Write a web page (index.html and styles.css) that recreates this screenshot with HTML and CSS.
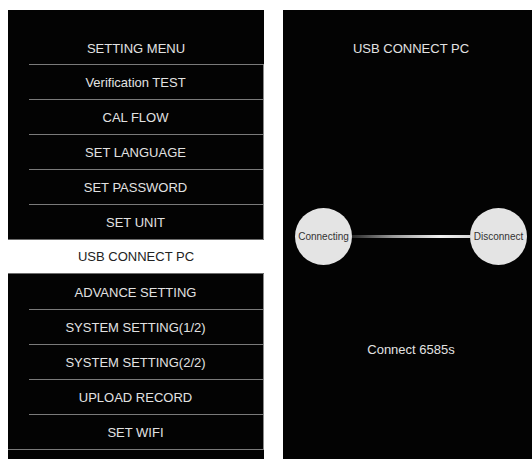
FILE: index.html
```html
<!DOCTYPE html>
<html lang="en">
<head>
    <meta charset="UTF-8">
    <meta name="viewport" content="width=device-width, initial-scale=1.0">
    <title>USB Connect PC</title>
    <link rel="stylesheet" href="styles.css">
</head>
<body>
    <div class="screens">
        <div class="panel menu">
            <div class="menu-title">SETTING MENU</div>
            <div class="menu-item">Verification TEST</div>
            <div class="menu-item">CAL FLOW</div>
            <div class="menu-item">SET LANGUAGE</div>
            <div class="menu-item">SET PASSWORD</div>
            <div class="menu-item">SET UNIT</div>
            <div class="menu-item active">USB CONNECT PC</div>
            <div class="menu-item first">ADVANCE SETTING</div>
            <div class="menu-item">SYSTEM SETTING(1/2)</div>
            <div class="menu-item">SYSTEM SETTING(2/2)</div>
            <div class="menu-item">UPLOAD RECORD</div>
            <div class="menu-item">SET WIFI</div>
            <div class="menu-end"></div>
        </div>

        <div class="panel usb">
            <div class="usb-title">USB CONNECT PC</div>
            <div class="link">
                <div class="node">Connecting</div>
                <div class="wire"></div>
                <div class="node">Disconnect</div>
            </div>
            <div class="usb-status">Connect 6585s</div>
        </div>
    </div>
</body>
</html>
```

FILE: styles.css
```css
html, body {
    margin: 0;
    height: 100%;
    overflow: hidden;
}
body {
    background: #fff;
    font-family: "Liberation Sans", Arial, sans-serif;
    font-size: 13px;
    color: #e2e2e2;
}
.screens {
    display: flex;
    gap: 19px;
    padding: 10px 0 0 8px;
    height: 100%;
    box-sizing: border-box;
}
.panel {
    width: 256px;
    flex-shrink: 0;
    background: #030303;
}
.menu-title {
    height: 54px;
    padding-top: 31px;
    box-sizing: border-box;
    line-height: 15px;
    text-align: center;
}
.menu-item {
    height: 35px;
    display: flex;
    align-items: center;
    justify-content: center;
    padding-top: 1px;
    box-sizing: border-box;
    border-right: 1px solid #8a8a8a;
    background: linear-gradient(#7a7a7a, #7a7a7a) no-repeat 21px 0 / calc(100% - 21px) 1px, #030303;
}
.menu-item.first {
    background: #030303;
}
.menu-item.active {
    background: #fff;
    color: #222;
    border-top: 1px solid #6c6c6c;
    border-bottom: 1px solid #6c6c6c;
    border-right: none;
    padding-top: 0;
}
.menu-end {
    height: 20px;
    border-top: 1px solid #7a7a7a;
}
.usb {
    display: flex;
    flex-direction: column;
}
.usb-title {
    padding-top: 31px;
    line-height: 15px;
    text-align: center;
}
.link {
    margin-top: 152px;
    padding: 0 12px;
    display: flex;
    align-items: center;
}
.node {
    width: 57px;
    height: 57px;
    border-radius: 50%;
    background: #e4e4e4;
    color: #333;
    font-size: 10px;
    display: flex;
    align-items: center;
    justify-content: center;
    flex-shrink: 0;
}
.wire {
    flex: 1;
    height: 3px;
    background: linear-gradient(to right, #2a2a2a, #9a9a9a 35%, #f2f2f2 75%, #d8d8d8);
}
.usb-status {
    margin-top: 77px;
    line-height: 15px;
    text-align: center;
}
```
